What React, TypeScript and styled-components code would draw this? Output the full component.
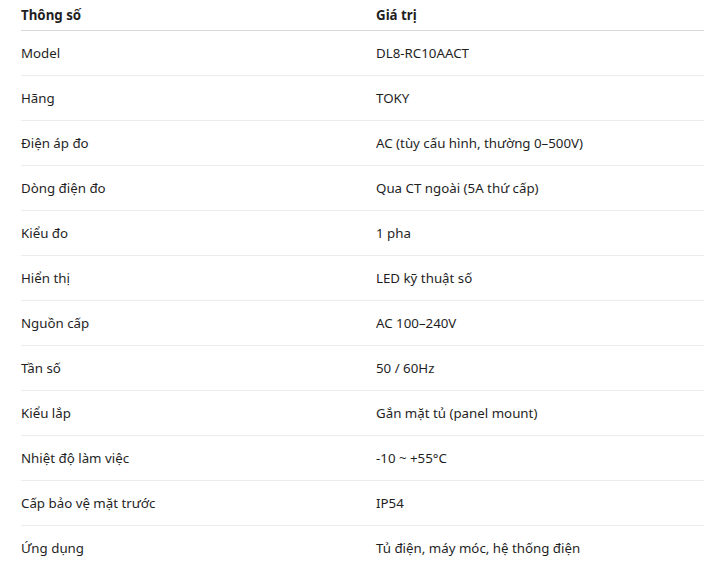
import styled, { createGlobalStyle } from "styled-components";

const specs: [string, string][] = [
  ["Model", "DL8-RC10AACT"],
  ["Hãng", "TOKY"],
  ["Điện áp đo", "AC (tùy cấu hình, thường 0–500V)"],
  ["Dòng điện đo", "Qua CT ngoài (5A thứ cấp)"],
  ["Kiểu đo", "1 pha"],
  ["Hiển thị", "LED kỹ thuật số"],
  ["Nguồn cấp", "AC 100–240V"],
  ["Tần số", "50 / 60Hz"],
  ["Kiểu lắp", "Gắn mặt tủ (panel mount)"],
  ["Nhiệt độ làm việc", "-10 ~ +55°C"],
  ["Cấp bảo vệ mặt trước", "IP54"],
  ["Ứng dụng", "Tủ điện, máy móc, hệ thống điện"],
];

const Global = createGlobalStyle`
  body {
    margin: 0;
    background: #fff;
    font-family: "Noto Sans", "Open Sans", sans-serif;
    color: #1f1f1f;
  }
`;

const Table = styled.div`
  margin-left: 21px;
  display: flex;
  flex-direction: column;
`;

const Row = styled.div<{ $head?: boolean; $last?: boolean }>`
  display: grid;
  grid-template-columns: 355px 1fr;
  align-items: center;
  height: ${(p) => (p.$head ? "30px" : "44px")};
  border-bottom: ${(p) =>
    p.$last ? "none" : p.$head ? "1px solid #d9d9d9" : "1px solid #ededed"};
  font-size: 13.3px;
  font-weight: ${(p) => (p.$head ? 700 : 400)};
`;

const Cell = styled.div`
  white-space: nowrap;
`;

export default function App() {
  return (
    <>
      <Global />
      <Table>
        <Row $head>
          <Cell>Thông số</Cell>
          <Cell>Giá trị</Cell>
        </Row>
        {specs.map(([k, v], i) => (
          <Row key={k} $last={i === specs.length - 1}>
            <Cell>{k}</Cell>
            <Cell>{v}</Cell>
          </Row>
        ))}
      </Table>
    </>
  );
}
